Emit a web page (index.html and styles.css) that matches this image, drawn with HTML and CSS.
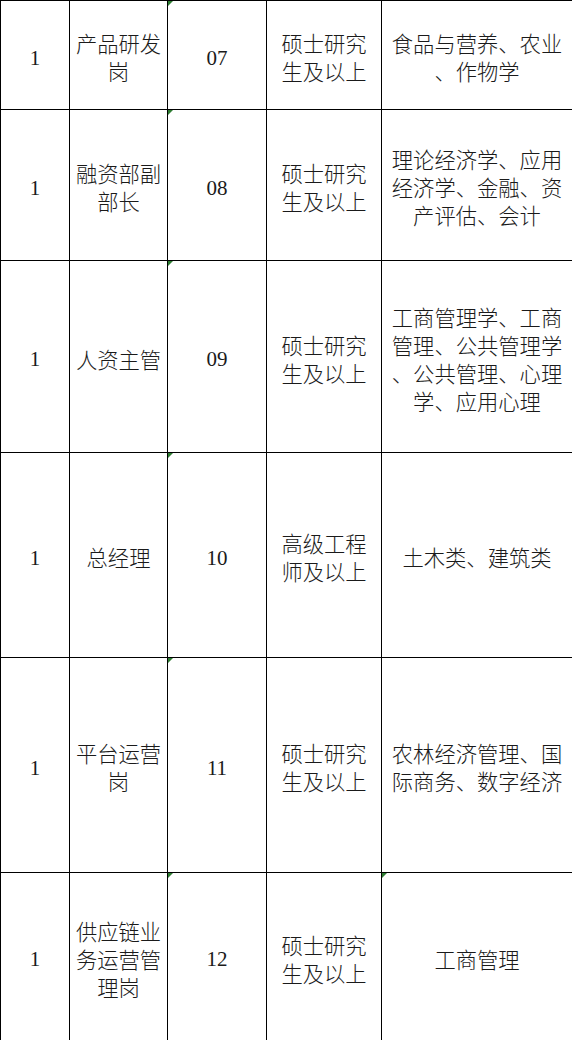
FILE: index.html
```html
<!DOCTYPE html>
<html lang="zh-CN">
<head>
<meta charset="utf-8">
<title>岗位表</title>
<link rel="stylesheet" href="styles.css">
</head>
<body>
<table class="grid">
  <colgroup>
    <col class="c1"><col class="c2"><col class="c3"><col class="c4"><col class="c5">
  </colgroup>
  <tbody>
    <tr class="r1">
      <td class="num">1</td>
      <td>产品研发<br>岗</td>
      <td class="num note">07</td>
      <td>硕士研究<br>生及以上</td>
      <td>食品与营养、农业<br>、作物学</td>
    </tr>
    <tr class="r2">
      <td class="num">1</td>
      <td>融资部副<br>部长</td>
      <td class="num note">08</td>
      <td>硕士研究<br>生及以上</td>
      <td>理论经济学、应用<br>经济学、金融、资<br>产评估、会计</td>
    </tr>
    <tr class="r3">
      <td class="num">1</td>
      <td>人资主管</td>
      <td class="num note">09</td>
      <td>硕士研究<br>生及以上</td>
      <td>工商管理学、工商<br>管理、公共管理学<br>、公共管理、心理<br>学、应用心理</td>
    </tr>
    <tr class="r4">
      <td class="num">1</td>
      <td>总经理</td>
      <td class="num note">10</td>
      <td>高级工程<br>师及以上</td>
      <td>土木类、建筑类</td>
    </tr>
    <tr class="r5">
      <td class="num">1</td>
      <td>平台运营<br>岗</td>
      <td class="num note">11</td>
      <td>硕士研究<br>生及以上</td>
      <td>农林经济管理、国<br>际商务、数字经济</td>
    </tr>
    <tr class="r6">
      <td class="num">1</td>
      <td>供应链业<br>务运营管<br>理岗</td>
      <td class="num note">12</td>
      <td>硕士研究<br>生及以上</td>
      <td class="note">工商管理</td>
    </tr>
  </tbody>
</table>
</body>
</html>
```
FILE: styles.css
```css
html, body {
  margin: 0;
  padding: 0;
  background: #ffffff;
}

.grid {
  border-collapse: collapse;
  table-layout: fixed;
  width: 572px;
  font-family: "Noto Sans CJK SC", "Noto Sans", sans-serif;
  font-weight: 300;
  font-size: 21.3px;
  line-height: 28px;
  color: #1a1a1a;
}

.c1 { width: 69px; }
.c2 { width: 98px; }
.c3 { width: 99px; }
.c4 { width: 115px; }
.c5 { width: 191px; }

.grid td {
  border: 1px solid #000000;
  padding: 4px 0 0 0;
  text-align: center;
  vertical-align: middle;
  white-space: nowrap;
  position: relative;
}

.grid td.num {
  font-family: "Liberation Serif", "Times New Roman", serif;
  font-weight: 400;
  font-size: 21px;
  padding-top: 5px;
}

.grid td.note::before {
  content: "";
  position: absolute;
  left: 0;
  top: 0;
  width: 0;
  height: 0;
  border-top: 5px solid #2e7d32;
  border-right: 5px solid transparent;
}

.r1 { height: 109px; }
.r2 { height: 151px; }
.r3 { height: 192px; }
.r4 { height: 205px; }
.r5 { height: 215px; }
.r6 { height: 168px; }
```
